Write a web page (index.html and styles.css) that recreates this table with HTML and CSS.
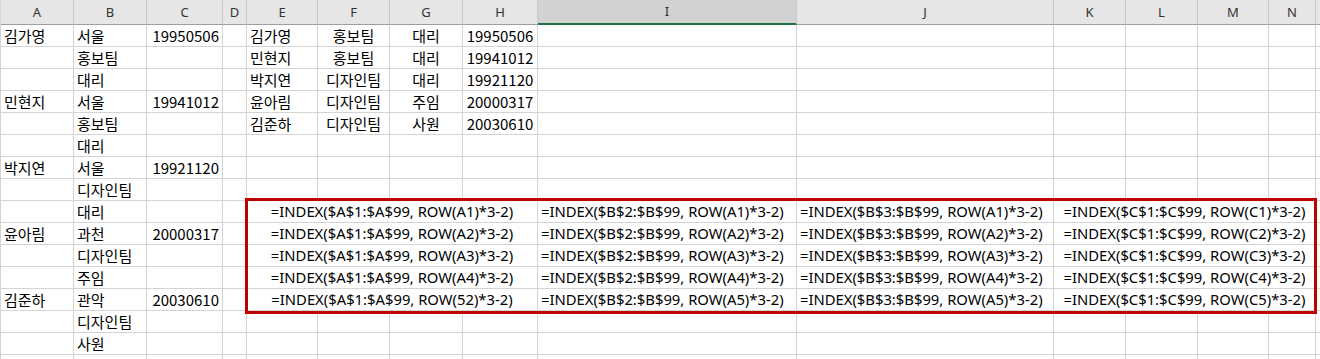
FILE: index.html
```html
<!DOCTYPE html>
<html lang="ko">
<head>
  <meta charset="UTF-8" />
  <title>Sheet1</title>
  <link rel="stylesheet" href="styles.css">
</head>
<body>
  <div class="sheet">
    <!-- column headers -->
    <div class="hd">A</div><div class="hd">B</div><div class="hd">C</div><div class="hd">D</div><div class="hd">E</div><div class="hd">F</div><div class="hd">G</div><div class="hd">H</div><div class="hd sel">I</div><div class="hd">J</div><div class="hd">K</div><div class="hd">L</div><div class="hd">M</div><div class="hd">N</div><div class="hd"></div>

    <!-- 1 -->
    <div class="c">김가영</div><div class="c">서울</div><div class="c num">19950506</div><div class="c"></div><div class="c">김가영</div><div class="c mid">홍보팀</div><div class="c mid">대리</div><div class="c mid">19950506</div><div class="c"></div><div class="c"></div><div class="c"></div><div class="c"></div><div class="c"></div><div class="c"></div><div class="c"></div>
    <!-- 2 -->
    <div class="c"></div><div class="c">홍보팀</div><div class="c num"></div><div class="c"></div><div class="c">민현지</div><div class="c mid">홍보팀</div><div class="c mid">대리</div><div class="c mid">19941012</div><div class="c"></div><div class="c"></div><div class="c"></div><div class="c"></div><div class="c"></div><div class="c"></div><div class="c"></div>
    <!-- 3 -->
    <div class="c"></div><div class="c">대리</div><div class="c num"></div><div class="c"></div><div class="c">박지연</div><div class="c mid">디자인팀</div><div class="c mid">대리</div><div class="c mid">19921120</div><div class="c"></div><div class="c"></div><div class="c"></div><div class="c"></div><div class="c"></div><div class="c"></div><div class="c"></div>
    <!-- 4 -->
    <div class="c">민현지</div><div class="c">서울</div><div class="c num">19941012</div><div class="c"></div><div class="c">윤아림</div><div class="c mid">디자인팀</div><div class="c mid">주임</div><div class="c mid">20000317</div><div class="c"></div><div class="c"></div><div class="c"></div><div class="c"></div><div class="c"></div><div class="c"></div><div class="c"></div>
    <!-- 5 -->
    <div class="c"></div><div class="c">홍보팀</div><div class="c num"></div><div class="c"></div><div class="c">김준하</div><div class="c mid">디자인팀</div><div class="c mid">사원</div><div class="c mid">20030610</div><div class="c"></div><div class="c"></div><div class="c"></div><div class="c"></div><div class="c"></div><div class="c"></div><div class="c"></div>
    <!-- 6 -->
    <div class="c"></div><div class="c">대리</div><div class="c"></div><div class="c"></div><div class="c"></div><div class="c"></div><div class="c"></div><div class="c"></div><div class="c"></div><div class="c"></div><div class="c"></div><div class="c"></div><div class="c"></div><div class="c"></div><div class="c"></div>
    <!-- 7 -->
    <div class="c">박지연</div><div class="c">서울</div><div class="c num">19921120</div><div class="c"></div><div class="c"></div><div class="c"></div><div class="c"></div><div class="c"></div><div class="c"></div><div class="c"></div><div class="c"></div><div class="c"></div><div class="c"></div><div class="c"></div><div class="c"></div>
    <!-- 8 -->
    <div class="c"></div><div class="c">디자인팀</div><div class="c"></div><div class="c"></div><div class="c"></div><div class="c"></div><div class="c"></div><div class="c"></div><div class="c"></div><div class="c"></div><div class="c"></div><div class="c"></div><div class="c"></div><div class="c"></div><div class="c"></div>

    <!-- E9:N13 formula block, outlined in red -->
    <div class="block">
      <div class="c f mid">=INDEX($A$1:$A$99, ROW(A1)*3-2)</div><div class="c f">=INDEX($B$2:$B$99, ROW(A1)*3-2)</div><div class="c f">=INDEX($B$3:$B$99, ROW(A1)*3-2)</div><div class="c f mid">=INDEX($C$1:$C$99, ROW(C1)*3-2)</div>
      <div class="c f mid">=INDEX($A$1:$A$99, ROW(A2)*3-2)</div><div class="c f">=INDEX($B$2:$B$99, ROW(A2)*3-2)</div><div class="c f">=INDEX($B$3:$B$99, ROW(A2)*3-2)</div><div class="c f mid">=INDEX($C$1:$C$99, ROW(C2)*3-2)</div>
      <div class="c f mid">=INDEX($A$1:$A$99, ROW(A3)*3-2)</div><div class="c f">=INDEX($B$2:$B$99, ROW(A3)*3-2)</div><div class="c f">=INDEX($B$3:$B$99, ROW(A3)*3-2)</div><div class="c f mid">=INDEX($C$1:$C$99, ROW(C3)*3-2)</div>
      <div class="c f mid">=INDEX($A$1:$A$99, ROW(A4)*3-2)</div><div class="c f">=INDEX($B$2:$B$99, ROW(A4)*3-2)</div><div class="c f">=INDEX($B$3:$B$99, ROW(A4)*3-2)</div><div class="c f mid">=INDEX($C$1:$C$99, ROW(C4)*3-2)</div>
      <div class="c f mid">=INDEX($A$1:$A$99, ROW(52)*3-2)</div><div class="c f">=INDEX($B$2:$B$99, ROW(A5)*3-2)</div><div class="c f">=INDEX($B$3:$B$99, ROW(A5)*3-2)</div><div class="c f mid">=INDEX($C$1:$C$99, ROW(C5)*3-2)</div>
    </div>

    <!-- 9 -->
    <div class="c"></div><div class="c">대리</div><div class="c"></div><div class="c"></div><div class="c"></div>
    <!-- 10 -->
    <div class="c">윤아림</div><div class="c">과천</div><div class="c num">20000317</div><div class="c"></div><div class="c"></div>
    <!-- 11 -->
    <div class="c"></div><div class="c">디자인팀</div><div class="c"></div><div class="c"></div><div class="c"></div>
    <!-- 12 -->
    <div class="c"></div><div class="c">주임</div><div class="c"></div><div class="c"></div><div class="c"></div>
    <!-- 13 -->
    <div class="c">김준하</div><div class="c">관악</div><div class="c num">20030610</div><div class="c"></div><div class="c"></div>
    <!-- 14 -->
    <div class="c"></div><div class="c">디자인팀</div><div class="c"></div><div class="c"></div><div class="c"></div><div class="c"></div><div class="c"></div><div class="c"></div><div class="c"></div><div class="c"></div><div class="c"></div><div class="c"></div><div class="c"></div><div class="c"></div><div class="c"></div>
    <!-- 15 -->
    <div class="c"></div><div class="c">사원</div><div class="c"></div><div class="c"></div><div class="c"></div><div class="c"></div><div class="c"></div><div class="c"></div><div class="c"></div><div class="c"></div><div class="c"></div><div class="c"></div><div class="c"></div><div class="c"></div><div class="c"></div>
    <!-- 16 -->
    <div class="c"></div><div class="c"></div><div class="c"></div><div class="c"></div><div class="c"></div><div class="c"></div><div class="c"></div><div class="c"></div><div class="c"></div><div class="c"></div><div class="c"></div><div class="c"></div><div class="c"></div><div class="c"></div><div class="c"></div>
  </div>
</body>
</html>
```

FILE: styles.css
```css
* {
  box-sizing: border-box;
}

body {
  margin: 0;
  background: #fff;
  overflow: hidden;
  font-family: "Noto Sans CJK KR", sans-serif;
}

.sheet {
  display: grid;
  grid-template-columns: 73px 73px 76px 24px 71px 72px 73px 75px 259px 257px 72px 72px 71px 47px 1fr;
  grid-template-rows: 25px repeat(16, 22px);
  border-left: 1px solid #d4d4d4;
}

.hd {
  background: #e6e6e6;
  border-right: 1px solid #c8c8c8;
  border-bottom: 1px solid #9e9e9e;
  text-align: center;
  font-family: "Noto Sans", sans-serif;
  font-size: 13px;
  line-height: 24px;
  color: #333;
}

.hd.sel {
  background: #d2d2d2;
  border-bottom: 2px solid #217346;
  line-height: 23px;
}

.c {
  border-right: 1px solid #d4d4d4;
  border-bottom: 1px solid #d4d4d4;
  padding: 0 3px;
  font-size: 15px;
  line-height: 21px;
  color: #000;
  white-space: nowrap;
  overflow: hidden;
}

/* formula text uses a latin face so the colons sit tight */
.f {
  font-family: "Noto Sans", "Noto Sans CJK KR", sans-serif;
  font-size: 14.8px;
}

.num {
  text-align: right;
}

.mid {
  text-align: center;
}

/* merged E:H | I | J | merged K:N */
.block {
  grid-row: 10 / 15;
  grid-column: 5 / 15;
  display: grid;
  grid-template-columns: 291px 259px 257px 1fr;
  grid-template-rows: repeat(5, 22px);
  position: relative;
}

.block::after {
  content: "";
  position: absolute;
  top: -3px;
  left: -2px;
  right: -1px;
  bottom: -3px;
  border: 3px solid #c00000;
  pointer-events: none;
}
```
